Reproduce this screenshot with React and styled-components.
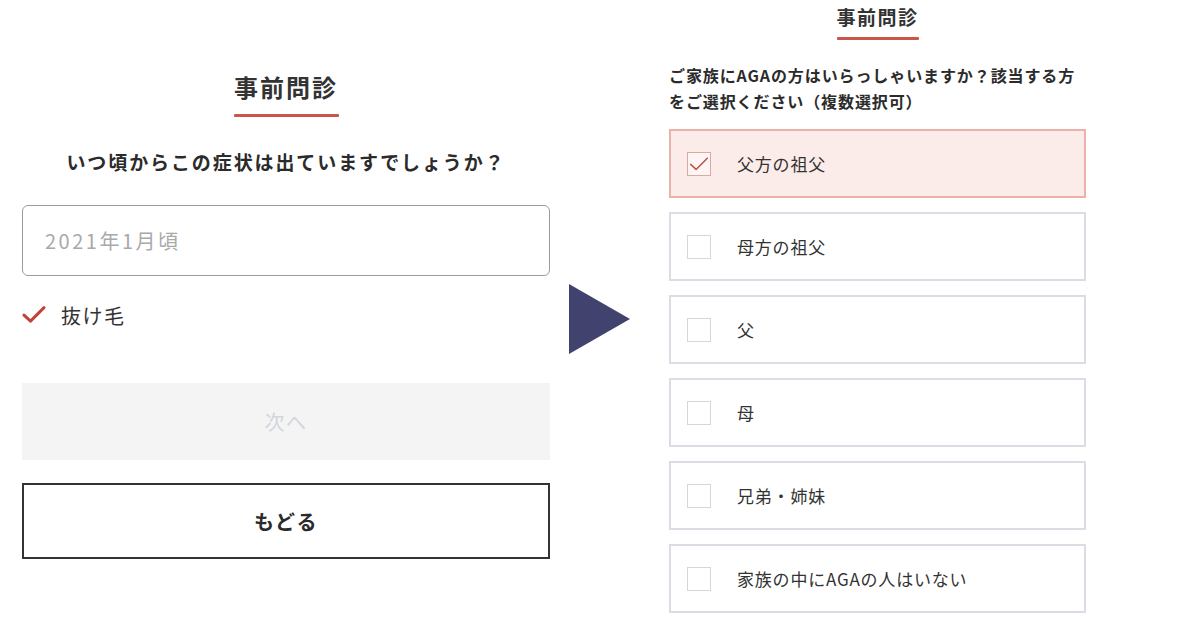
import React, { useState } from "react";
import styled, { createGlobalStyle } from "styled-components";

// page reset
const GlobalStyle = createGlobalStyle`
  html, body { margin: 0; padding: 0; background: #fff; }
  body {
    font-family: "Noto Sans CJK JP", "Noto Sans", sans-serif;
    color: #2b2b2b;
  }
`;

const Page = styled.div`
  width: 1200px;
  height: 630px;
  display: flex;
  align-items: flex-start;
  padding-left: 22px;
  box-sizing: border-box;
  overflow: hidden;
`;

const LeftPanel = styled.section`
  width: 528px;
  padding-top: 72px;
  display: flex;
  flex-direction: column;
  align-items: center;
`;

const RightPanel = styled.section`
  width: 417px;
  padding-top: 4px;
  display: flex;
  flex-direction: column;
  align-items: center;
`;

const Title = styled.h1`
  margin: 0;
  font-size: ${(p) => (p.$small ? "19px" : "24px")};
  line-height: ${(p) => (p.$small ? "26px" : "30px")};
  letter-spacing: ${(p) => (p.$small ? "1.5px" : "2px")};
  font-weight: 700;
  color: #333;
`;

const Underline = styled.div`
  width: ${(p) => p.$w}px;
  height: 3px;
  margin-top: ${(p) => p.$mt}px;
  background: #c9564a;
  border-radius: 1px;
`;

const Question = styled.p`
  margin: 32px 0 0;
  font-size: 19px;
  line-height: 26px;
  letter-spacing: 1.9px;
  font-weight: 700;
  color: #2b2b2b;
`;

const Input = styled.input`
  margin-top: 30px;
  width: 100%;
  height: 71px;
  box-sizing: border-box;
  border: 1.5px solid #9c9c9c;
  border-radius: 6px;
  padding: 0 22px;
  font-family: inherit;
  font-size: 20px;
  letter-spacing: 2.5px;
  color: #333;
  outline: none;
  &::placeholder { color: #a9a9a9; }
`;

const SymptomRow = styled.div`
  align-self: stretch;
  margin-top: 26px;
  display: flex;
  align-items: center;
  gap: 15px;
  height: 26px;
  font-size: 20px;
  color: #333;
  letter-spacing: 1.5px;
`;

const Button = styled.button`
  width: 100%;
  height: ${(p) => p.$h}px;
  margin-top: ${(p) => p.$mt}px;
  box-sizing: border-box;
  font-family: inherit;
  font-size: 20px;
  letter-spacing: 1.5px;
  font-weight: ${(p) => (p.$disabled ? 400 : 700)};
  color: ${(p) => (p.$disabled ? "#d2d4de" : "#2b2b2b")};
  background: ${(p) => (p.$disabled ? "#f4f4f4" : "#fff")};
  border: ${(p) => (p.$disabled ? "none" : "2px solid #333")};
  border-radius: 0;
  cursor: pointer;
`;

const ArrowCol = styled.div`
  margin: 284px 39px 0 19px;
  width: 61px;
  height: 70px;
  display: flex;
`;

const SubQuestion = styled.p`
  align-self: stretch;
  margin: 22px 0 0;
  font-size: 16px;
  line-height: 26px;
  letter-spacing: 0.9px;
  font-weight: 700;
  color: #2b2b2b;
`;

const OptionList = styled.div`
  align-self: stretch;
  margin-top: 15px;
  display: flex;
  flex-direction: column;
  gap: 14px;
`;

const Option = styled.label`
  height: 69px;
  box-sizing: border-box;
  display: flex;
  align-items: center;
  gap: 26px;
  padding-left: 16px;
  border: 2px solid ${(p) => (p.$checked ? "#eab2a9" : "#dcdde4")};
  background: ${(p) => (p.$checked ? "#fcece9" : "#fff")};
  font-size: 17px;
  letter-spacing: 0.8px;
  color: #333;
  cursor: pointer;
`;

const Box = styled.span`
  width: 24px;
  height: 24px;
  box-sizing: border-box;
  border: 1.5px solid ${(p) => (p.$checked ? "#d8aaa3" : "#d6d7de")};
  background: ${(p) => (p.$checked ? "#fdf5f3" : "#fff")};
  display: flex;
  align-items: center;
  justify-content: center;
  flex-shrink: 0;
`;

const CheckMark = ({ size = 24, color = "#c0443a", width = 3 }) => (
  <svg width={size} height={size * 0.8} viewBox="0 0 24 19" fill="none">
    <path d="M2 10 L8.5 16 L22 2.5" stroke={color} strokeWidth={width} strokeLinecap="round" strokeLinejoin="round" />
  </svg>
);

const options = ["父方の祖父", "母方の祖父", "父", "母", "兄弟・姉妹", "家族の中にAGAの人はいない"];

const App = () => {
  const [checked, setChecked] = useState([0]);

  const toggle = (i) =>
    setChecked(checked.includes(i) ? checked.filter((c) => c !== i) : [...checked, i]);

  return (
    <>
      <GlobalStyle />
      <Page>
        <LeftPanel>
          <Title>事前問診</Title>
          <Underline $w={105} $mt={12} />
          <Question>いつ頃からこの症状は出ていますでしょうか？</Question>
          <Input placeholder="2021年1月頃" />
          <SymptomRow>
            <CheckMark size={24} />
            抜け毛
          </SymptomRow>
          <Button $disabled $h={77} $mt={55}>次へ</Button>
          <Button $h={76} $mt={23}>もどる</Button>
        </LeftPanel>

        <ArrowCol>
          <svg width="61" height="70" viewBox="0 0 61 70">
            <polygon points="0,0 61,35 0,70" fill="#41436e" />
          </svg>
        </ArrowCol>

        <RightPanel>
          <Title $small>事前問診</Title>
          <Underline $w={82} $mt={7} />
          <SubQuestion>
            ご家族にAGAの方はいらっしゃいますか？該当する方
            <br />
            をご選択ください（複数選択可）
          </SubQuestion>
          <OptionList>
            {options.map((o, i) => {
              const on = checked.includes(i);
              return (
                <Option key={o} $checked={on} onClick={() => toggle(i)}>
                  <Box $checked={on}>{on && <CheckMark size={20} color="#b8544a" width={1.8} />}</Box>
                  {o}
                </Option>
              );
            })}
          </OptionList>
        </RightPanel>
      </Page>
    </>
  );
};

export default App;
